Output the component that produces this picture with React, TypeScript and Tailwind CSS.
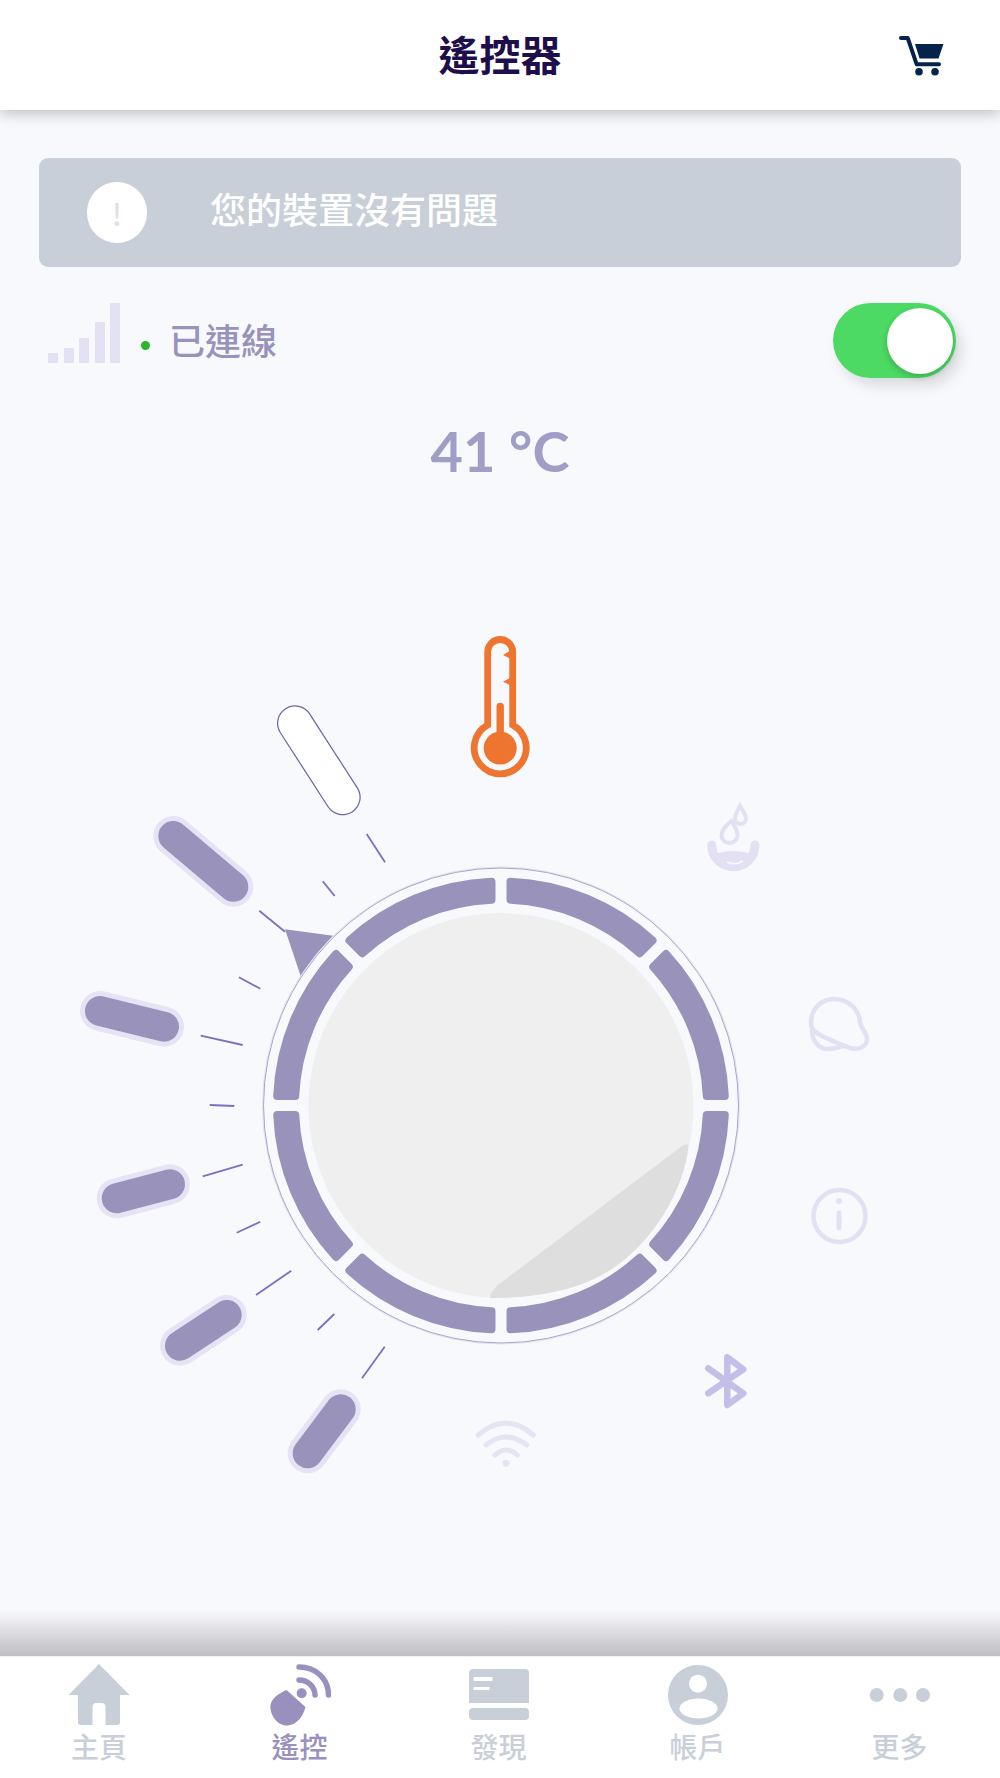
const RING_CX = 501;
const RING_CY = 1105.5;

const purple = '#9993bc';
const halo = '#e6e3f5';
const faint = '#e3e0f3';

// knob caps, in page coordinates
const pills = [
  [173.3, 836, 233.3, 886.7],
  [100, 1011, 164, 1026.7],
  [116.7, 1198.3, 170, 1184.3],
  [180, 1345.7, 226.7, 1315],
  [307.7, 1453.3, 340.7, 1409.3],
];

const ticks = [
  [366.7, 834, 385, 862.3],
  [322.7, 881.3, 334.7, 896],
  [259.3, 910.7, 285, 931.7],
  [239, 977.3, 260.3, 988.7],
  [200.7, 1035.7, 242.7, 1045],
  [209.7, 1105, 234.3, 1106],
  [202.7, 1176.3, 242.7, 1164.7],
  [236.7, 1232.7, 260.3, 1221.7],
  [256, 1295, 291.3, 1270.7],
  [317.7, 1330, 334.3, 1314],
  [362, 1378.3, 384.7, 1346.7],
];

function pt(r: number, deg: number) {
  const a = (deg * Math.PI) / 180;
  return `${(RING_CX + r * Math.cos(a)).toFixed(2)} ${(RING_CY + r * Math.sin(a)).toFixed(2)}`;
}

// one ring segment; the stroke rounds its corners
function segment(start: number, end: number) {
  const ro = 224;
  const ri = 206;
  const pad = 9.5;
  const ao = (pad / ro) * (180 / Math.PI);
  const ai = (pad / ri) * (180 / Math.PI);
  return `M${pt(ro, start + ao)} A${ro} ${ro} 0 0 1 ${pt(ro, end - ao)} L${pt(ri, end - ai)} A${ri} ${ri} 0 0 0 ${pt(ri, start + ai)} Z`;
}

function Dial() {
  return (
    <svg viewBox="0 620 1000 860" className="block h-[860px] w-[1000px]">
      {/* thermometer */}
      <path
        d="M487.700 725V652a12.500 12.500 0 0 1 25 0V725a26 26 0 1 1-25 0Z"
        fill="none"
        stroke="#ed7530"
        strokeWidth="6.800"
      />
      <path d="M496.500 706.500a3.700 3.700 0 0 1 7.400 0V732a16.500 16.500 0 1 1-7.400 0Z" fill="#ed7530" />
      <path d="M511 650L503 655L510 658.500V678L503 681.700L510 685Z" fill="#ed7530" />

      {/* water */}
      <g fill="none" stroke={faint} strokeWidth="4">
        <path d="M731.500 821c3 5 6 9 6 14a8 8 0 0 1-16 0c0-5 5-10 10-14Z" />
        <path d="M740 806c2 4 6 8 6 12.500a5.500 5.500 0 0 1-11 0c0-4 3-8.500 5-12.500Z" />
      </g>
      <path d="M711.700 845A21.600 21.600 0 0 0 755 845" fill="none" stroke={faint} strokeWidth="9" strokeLinecap="round" />
      <path d="M718 853Q733 849 749 853Q746 866 733 866Q721 866 718 853Z" fill={faint} />
      <path d="M727 862Q735 866 743 861" fill="none" stroke="#f8f9fd" strokeWidth="1.500" />

      {/* planet */}
      <g fill="none" stroke={faint} strokeWidth="4.500" strokeLinecap="round">
        <path d="M811 1023C811 1008 822 999 834 999C848 999 859 1009 860 1022C861 1030 868 1033 867 1040C866 1048 857 1050 850 1048C840 1044 830 1040 822 1036C815 1032 811 1030 811 1023Z" />
        <path d="M812 1030C812 1040 818 1048 826 1049C835 1050 840 1045 846 1046" />
      </g>

      {/* info */}
      <circle cx="839.500" cy="1216" r="26" fill="none" stroke={faint} strokeWidth="4.500" />
      <circle cx="839" cy="1201" r="3" fill={faint} />
      <path d="M839 1213V1228" stroke={faint} strokeWidth="5" strokeLinecap="round" />

      {/* bluetooth */}
      <path
        d="M708.300 1368.300L743.300 1393.300L727.300 1405V1357.300L743.300 1369.300L708.300 1393.300"
        fill="none"
        stroke="#c3bfe8"
        strokeWidth="6.500"
        strokeLinecap="round"
        strokeLinejoin="round"
      />

      {/* wifi */}
      <g fill="none" stroke="#e6e3f3" strokeWidth="5" strokeLinecap="round">
        <path d="M478.300 1435Q506 1411 533.300 1435" />
        <path d="M486 1445Q506 1429 526.700 1445" />
        <path d="M495 1455Q506 1445 517.300 1455" />
      </g>
      <circle cx="506" cy="1463.300" r="3.500" fill="#e6e3f3" />

      {/* white knob */}
      <line x1="295" y1="723.300" x2="342.700" y2="797.300" stroke="#6e67a8" strokeWidth="36" strokeLinecap="round" />
      <line x1="295" y1="723.300" x2="342.700" y2="797.300" stroke="#ffffff" strokeWidth="33.500" strokeLinecap="round" />

      {pills.map(([x1, y1, x2, y2]) => (
        <g key={x1} strokeLinecap="round">
          <line x1={x1} y1={y1} x2={x2} y2={y2} stroke={halo} strokeWidth="40" />
          <line x1={x1} y1={y1} x2={x2} y2={y2} stroke={purple} strokeWidth="30" />
        </g>
      ))}

      {ticks.map(([x1, y1, x2, y2]) => (
        <line key={x1} x1={x1} y1={y1} x2={x2} y2={y2} stroke="#7a70c0" strokeWidth="1.800" />
      ))}

      {/* pointer */}
      <path d="M285 929.300L335 936L302 980Z" fill={purple} />

      {/* dial */}
      <circle cx={RING_CX} cy={RING_CY} r="238.500" fill="#f8f9fd" stroke={faint} strokeWidth="1" />
      <circle cx={RING_CX} cy={RING_CY} r="237.500" fill="#f8f9fd" stroke="#a9a5c9" strokeWidth="1" />
      {[0, 45, 90, 135, 180, 225, 270, 315].map((a) => (
        <path key={a} d={segment(a, a + 45)} fill={purple} stroke={purple} strokeWidth="8" strokeLinejoin="round" />
      ))}
      <circle cx={RING_CX} cy={RING_CY} r="192.500" fill="#efefef" />
      <path
        d="M682 1146Q686 1143 688.500 1145C685 1190 650 1250 600 1276C570 1292 530 1298 490 1298Q490 1292 498 1285Z"
        fill="#dedede"
      />
    </svg>
  );
}

function Cart() {
  return (
    <svg viewBox="0 0 46 41" className="h-[41px] w-[46px]">
      <path d="M2 2H8.700L17.700 28.300H40" fill="none" stroke="#04234a" strokeWidth="4" strokeLinecap="round" strokeLinejoin="round" />
      <path d="M16 8H44.500L39.500 22.500H20.500Z" fill="#04234a" />
      <circle cx="20" cy="35.700" r="3.800" fill="#04234a" />
      <circle cx="36" cy="35.700" r="3.800" fill="#04234a" />
    </svg>
  );
}

const NAV_GREY = '#c9cfd8';

function HomeIcon() {
  return (
    <svg viewBox="0 0 62 62" className="h-[62px] w-[62px]">
      <path
        d="M31 0L61.500 31H52V58a3 3 0 0 1-3 3H37.500V43a4 4 0 0 0-4-4H28.500a4 4 0 0 0-4 4V61H13a3 3 0 0 1-3-3V31H.500Z"
        fill={NAV_GREY}
      />
    </svg>
  );
}

function RemoteIcon() {
  return (
    <svg viewBox="0 0 62 62" className="h-[62px] w-[62px]">
      <path d="M17.500 26L36.500 43C34.500 52 27.500 61 18.500 61.500C7.500 62 .500 50 1.500 41C2.500 34 10.500 29 17.500 26Z" fill="#9a90bd" />
      <circle cx="32.700" cy="29.300" r="5" fill="#9a90bd" />
      <g fill="none" stroke="#9a90bd" strokeWidth="5.500" strokeLinecap="round">
        <path d="M30 16C39 16 46 23 46 31" />
        <path d="M30 3C47 3 59.500 15 59.500 31" />
      </g>
    </svg>
  );
}

function BillIcon() {
  return (
    <svg viewBox="0 0 60 52" className="mt-[5px] mb-[5px] h-[52px] w-[60px]">
      <path d="M4 0H56a4 4 0 0 1 4 4V34H0V4a4 4 0 0 1 4-4Z" fill={NAV_GREY} />
      <rect x="0" y="39" width="60" height="12" rx="4" fill={NAV_GREY} />
      <rect x="4.500" y="8" width="19" height="4" rx="1" fill="#ffffff" />
      <rect x="4.500" y="18" width="16" height="3" fill="#ffffff" />
    </svg>
  );
}

function AccountIcon() {
  return (
    <svg viewBox="0 0 62 62" className="h-[62px] w-[62px]">
      <circle cx="31" cy="31" r="30" fill={NAV_GREY} />
      <circle cx="31" cy="19.700" r="9" fill="#ffffff" />
      <ellipse cx="31.500" cy="44.500" rx="19" ry="10" fill="#ffffff" />
    </svg>
  );
}

function MoreIcon() {
  return (
    <svg viewBox="0 0 62 62" className="h-[62px] w-[62px]">
      <circle cx="7.700" cy="31" r="7" fill={NAV_GREY} />
      <circle cx="31.300" cy="31" r="7" fill={NAV_GREY} />
      <circle cx="54" cy="31" r="7" fill={NAV_GREY} />
    </svg>
  );
}

const navItems = [
  { label: '主頁', icon: <HomeIcon />, active: false, width: 'w-[198px]' },
  { label: '遙控', icon: <RemoteIcon />, active: true, width: 'w-[203px]' },
  { label: '發現', icon: <BillIcon />, active: false, width: 'w-[195px]' },
  { label: '帳戶', icon: <AccountIcon />, active: false, width: 'w-[203px]' },
  { label: '更多', icon: <MoreIcon />, active: false, width: 'w-[201px]' },
];

const bars = ['h-[10px]', 'h-[15px]', 'h-[25px]', 'h-[41px]', 'h-[60px]'];

export default function App() {
  return (
    <div className="flex h-[1778px] w-[1000px] flex-col overflow-hidden bg-[#f8f9fd] font-['Noto_Sans_CJK_TC','Noto_Sans',sans-serif]">
      {/* Header */}
      <header className="relative flex h-[110px] shrink-0 items-center justify-center bg-white shadow-[0_3px_14px_rgba(0,0,0,0.25)]">
        <h1 className="mb-[3px] text-[41px] leading-none font-bold text-[#1e0f4a]">遙控器</h1>
        <div className="absolute top-[36px] right-[55px]">
          <Cart />
        </div>
      </header>

      {/* Status banner */}
      <div className="mx-[39px] mt-[48px] flex h-[109px] shrink-0 items-center rounded-[9px] bg-[#c9cfd8] pl-[48px]">
        <div className="flex h-[61px] w-[60px] items-center justify-center rounded-full bg-white text-[30px] leading-none font-medium text-[#dfe2e7]">
          !
        </div>
        <p className="mb-[10px] ml-[63px] text-[36px] leading-none font-medium text-white">您的裝置沒有問題</p>
      </div>

      {/* Connection row */}
      <div className="mt-[36px] flex h-[74px] shrink-0 items-start pr-[44px] pl-[48px]">
        <div className="flex h-[60px] items-end gap-[5.5px]">
          {bars.map((h) => (
            <div key={h} className={`w-[10px] bg-[#e3e1f3] ${h}`} />
          ))}
        </div>
        <div className="mt-[38px] ml-[21px] h-[9px] w-[9px] rounded-full bg-[#2db52d]" />
        <span className="mt-[18px] ml-[19px] text-[36px] leading-none font-medium text-[#9993bc]">已連線</span>
        <div className="ml-auto flex h-[75px] w-[123px] items-center justify-end rounded-full bg-[#4cd964] pr-[3px] shadow-[6px_8px_14px_rgba(0,0,0,0.12)]">
          <div className="h-[66px] w-[66px] rounded-full bg-white shadow-[0_3px_6px_rgba(0,0,0,0.2)]" />
        </div>
      </div>

      {/* Temperature */}
      <div className="mt-[41px] h-[66px] shrink-0 text-center font-['Lato',sans-serif] text-[56px] leading-[66px] font-bold text-[#a09dc6]">
        41 °C
      </div>

      <div className="mt-[136px] shrink-0">
        <Dial />
      </div>

      {/* Bottom fade and tab bar */}
      <div className="mt-auto h-[46px] shrink-0 bg-gradient-to-b from-[#f8f9fd] to-[#bebdc3]" />
      <nav className="flex h-[122px] shrink-0 border-t border-[#f2f2f4] bg-white">
        {navItems.map((item) => (
          <div key={item.label} className={`flex flex-col items-center pt-[7px] ${item.width}`}>
            {item.icon}
            <span
              className={`mt-[6px] text-[28px] leading-none font-medium ${
                item.active ? 'text-[#9a90bd]' : 'text-[#c9cfd8]'
              }`}
            >
              {item.label}
            </span>
          </div>
        ))}
      </nav>
    </div>
  );
}
